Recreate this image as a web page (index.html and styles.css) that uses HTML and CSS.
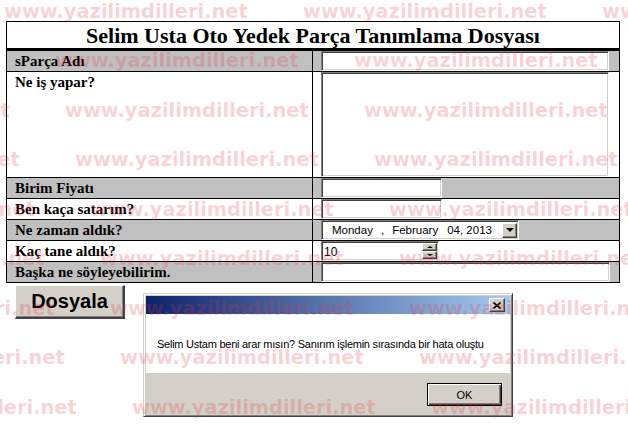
FILE: index.html
```html
<!DOCTYPE html>
<html lang="tr">
<head>
<meta charset="utf-8">
<title>Selim Usta Oto Yedek Parça Tanımlama Dosyası</title>
<link rel="stylesheet" href="styles.css">
</head>
<body>
<div class="page">
  <div class="sheet">
    <div class="title">Selim Usta Oto Yedek Parça Tanımlama Dosyası</div>
    <div class="row gray">
      <div class="label">sParça Adı</div>
      <div class="value"><div class="field f-long"></div></div>
    </div>
    <div class="row tall">
      <div class="label">Ne iş yapar?</div>
      <div class="value"><div class="field f-area"></div></div>
    </div>
    <div class="row gray">
      <div class="label">Birim Fiyatı</div>
      <div class="value"><div class="field f-short"></div></div>
    </div>
    <div class="row">
      <div class="label">Ben kaça satarım?</div>
      <div class="value"><div class="field f-short"></div></div>
    </div>
    <div class="row gray">
      <div class="label">Ne zaman aldık?</div>
      <div class="value">
        <div class="field f-date">
          <span class="d-day">Monday</span><span class="d-comma">,</span><span class="d-month">February</span><span class="d-num">04, 2013</span>
          <span class="drop raised"><span class="tri-down"></span></span>
        </div>
      </div>
    </div>
    <div class="row">
      <div class="label">Kaç tane aldık?</div>
      <div class="value">
        <div class="field f-spin">
          <span class="spin-val">10</span>
          <span class="spin-btns">
            <span class="spin-btn raised"><span class="tri-up-s"></span></span>
            <span class="spin-btn raised"><span class="tri-down-s"></span></span>
          </span>
        </div>
      </div>
    </div>
    <div class="row gray">
      <div class="label">Başka ne söyleyebilirim.</div>
      <div class="value"><div class="field f-long2"></div></div>
    </div>
  </div>

  <button class="btn-main raised" type="button">Dosyala</button>

  <div class="dialog">
    <div class="titlebar">
      <span class="close raised">
        <svg width="8" height="7" viewBox="0 0 8 7"><path d="M0.5 0.5 L7.5 6.5 M7.5 0.5 L0.5 6.5" stroke="#000" stroke-width="1.6" fill="none"/></svg>
      </span>
    </div>
    <div class="msg">Selim Ustam beni arar mısın? Sanırım işlemin sırasında bir hata oluştu</div>
    <div class="actions"><button class="ok" type="button">OK</button></div>
  </div>

  <div class="watermark">
    <div class="wm-row wm1"><span>www.yazilimdilleri.net</span><span>www.yazilimdilleri.net</span><span>www.yazilimdilleri.net</span><span>www.yazilimdilleri.net</span></div>
    <div class="wm-row wm2"><span>www.yazilimdilleri.net</span><span>www.yazilimdilleri.net</span><span>www.yazilimdilleri.net</span><span>www.yazilimdilleri.net</span></div>
    <div class="wm-row wm3"><span>www.yazilimdilleri.net</span><span>www.yazilimdilleri.net</span><span>www.yazilimdilleri.net</span><span>www.yazilimdilleri.net</span></div>
    <div class="wm-row wm4"><span>www.yazilimdilleri.net</span><span>www.yazilimdilleri.net</span><span>www.yazilimdilleri.net</span><span>www.yazilimdilleri.net</span></div>
    <div class="wm-row wm5"><span>www.yazilimdilleri.net</span><span>www.yazilimdilleri.net</span><span>www.yazilimdilleri.net</span><span>www.yazilimdilleri.net</span></div>
    <div class="wm-row wm6"><span>www.yazilimdilleri.net</span><span>www.yazilimdilleri.net</span><span>www.yazilimdilleri.net</span><span>www.yazilimdilleri.net</span></div>
    <div class="wm-row wm7"><span>www.yazilimdilleri.net</span><span>www.yazilimdilleri.net</span><span>www.yazilimdilleri.net</span><span>www.yazilimdilleri.net</span></div>
    <div class="wm-row wm8"><span>www.yazilimdilleri.net</span><span>www.yazilimdilleri.net</span><span>www.yazilimdilleri.net</span><span>www.yazilimdilleri.net</span></div>
    <div class="wm-row wm9"><span>www.yazilimdilleri.net</span><span>www.yazilimdilleri.net</span><span>www.yazilimdilleri.net</span><span>www.yazilimdilleri.net</span></div>
  </div>
</div>
</body>
</html>
```

FILE: styles.css
```css
html, body {
  margin: 0;
  padding: 0;
  background: #fff;
}

.page {
  position: relative;
  width: 628px;
  height: 424px;
  overflow: hidden;
  padding-top: 21px;
  box-sizing: border-box;
}

/* ---------- sheet ---------- */
.sheet {
  margin-left: 6px;
  width: 614px;
  border: 1px solid #000;
  box-sizing: border-box;
  font-family: "Liberation Serif", "Times New Roman", serif;
  color: #000;
}

.title {
  height: 26px;
  line-height: 27px;
  border-bottom: 3px solid #000;
  text-align: center;
  font-size: 22px;
  font-weight: bold;
}

.row {
  display: grid;
  grid-template-columns: 306px 1fr;
  height: 20px;
}

.row + .row {
  border-top: 1px solid #000;
}

.row.tall {
  height: 105px;
}

.row.gray {
  background: #c0c0c0;
}

.label {
  border-right: 1px solid #000;
  padding-left: 8px;
  font-size: 15px;
  font-weight: bold;
  line-height: 20px;
  white-space: nowrap;
}

.value {
  padding-left: 8px;
  display: flex;
  align-items: stretch;
}

/* ---------- fields ---------- */
.field {
  background: #fff;
  box-sizing: border-box;
  border: 1px solid;
  border-color: #808080 #fff #fff #808080;
  box-shadow: inset 1px 1px #404040, inset -1px -1px #d4d0c8;
  height: 20px;
}

.f-long { width: 288px; }
.f-long2 { width: 289px; }
.f-short { width: 121px; }
.f-area { width: 288px; height: 105px; }

.f-date {
  width: 198px;
  display: flex;
  align-items: center;
  padding-left: 10px;
  font-family: "Liberation Sans", Arial, sans-serif;
  font-size: 11.5px;
  color: #000;
  white-space: nowrap;
}

.d-comma { margin-left: 8px; }
.d-month { margin-left: 8px; }
.d-num { margin-left: 9px; }

.drop {
  margin-left: auto;
  margin-right: 1px;
  width: 15px;
  height: 15px;
  display: flex;
  align-items: center;
  justify-content: center;
}

.tri-down {
  width: 0;
  height: 0;
  border-left: 4px solid transparent;
  border-right: 4px solid transparent;
  border-top: 4px solid #000;
}

.f-spin {
  width: 118px;
  display: flex;
  align-items: center;
  font-family: "Liberation Sans", Arial, sans-serif;
  font-size: 12px;
  padding-left: 2px;
}

.spin-val {
  margin-top: 2px;
}

.spin-btns {
  margin-left: auto;
  margin-right: 1px;
  display: flex;
  flex-direction: column;
  height: 16px;
}

.spin-btn {
  width: 15px;
  height: 8px;
  display: flex;
  align-items: center;
  justify-content: center;
  box-sizing: border-box;
}

.tri-up-s {
  width: 0;
  height: 0;
  border-left: 3px solid transparent;
  border-right: 3px solid transparent;
  border-bottom: 2px solid #000;
}

.tri-down-s {
  width: 0;
  height: 0;
  border-left: 3px solid transparent;
  border-right: 3px solid transparent;
  border-top: 2px solid #000;
}

/* ---------- bevels ---------- */
.raised {
  background: #d4d0c8;
  box-sizing: border-box;
  border: 1px solid;
  border-color: #fff #404040 #404040 #fff;
  box-shadow: inset -1px -1px #808080;
}

/* ---------- main button ---------- */
.btn-main {
  display: block;
  margin: 2px 0 0 15px;
  width: 110px;
  height: 34px;
  padding: 0;
  font-family: "Liberation Sans", Arial, sans-serif;
  font-weight: bold;
  font-size: 20px;
  color: #000;
  border-width: 1px 2px 2px 1px;
  border-style: solid;
  border-color: #fff #404040 #404040 #fff;
}

/* ---------- dialog ---------- */
.dialog {
  position: absolute;
  left: 143px;
  top: 293px;
  width: 370px;
  height: 124px;
  box-sizing: border-box;
  background: #d4d0c8;
  border: 1px solid;
  border-color: #d4d0c8 #404040 #404040 #d4d0c8;
  box-shadow: inset 1px 1px #fff, inset -1px -1px #808080;
  padding: 2px;
  display: flex;
  flex-direction: column;
}

.titlebar {
  height: 18px;
  flex: none;
  background: linear-gradient(to right, #0a246a, #a6caf0);
  display: flex;
  align-items: center;
  justify-content: flex-end;
  padding-right: 5px;
}

.close {
  width: 16px;
  height: 14px;
  display: flex;
  align-items: center;
  justify-content: center;
}

.close svg {
  display: block;
}

.msg {
  height: 59px;
  flex: none;
  background: #fff;
  display: flex;
  align-items: center;
  padding-left: 11px;
  font-family: "Liberation Sans", Arial, sans-serif;
  font-size: 11px;
  letter-spacing: -0.25px;
  color: #000;
}

.actions {
  flex: 1;
  display: flex;
  justify-content: flex-end;
  align-items: flex-start;
  padding: 10px 8px 0 0;
}

.ok {
  width: 75px;
  height: 23px;
  padding: 0;
  background: #d4d0c8;
  border: 1px solid #000;
  box-shadow: inset 1px 1px #fff, inset -1px -1px #404040, inset -2px -2px #808080;
  font-family: "Liberation Sans", Arial, sans-serif;
  font-size: 11px;
  color: #000;
}

/* ---------- watermark overlay ---------- */
.watermark {
  position: absolute;
  left: 0;
  top: -13.5px;
  width: 628px;
  pointer-events: none;
  font-family: "DejaVu Sans", Verdana, sans-serif;
  font-weight: bold;
  font-size: 19.4px;
  line-height: 49.5px;
  color: rgba(230, 50, 70, 0.22);
  white-space: nowrap;
}

.wm-row span {
  display: inline-block;
  width: 299px;
}

.wm1 { margin-left: -295px; }
.wm2 { margin-left: -244px; }
.wm3 { margin-left: -234px; }
.wm4 { margin-left: -224px; }
.wm5 { margin-left: -209px; }
.wm6 { margin-left: -199px; }
.wm7 { margin-left: -189px; }
.wm8 { margin-left: -179px; }
.wm9 { margin-left: -167px; }
```
